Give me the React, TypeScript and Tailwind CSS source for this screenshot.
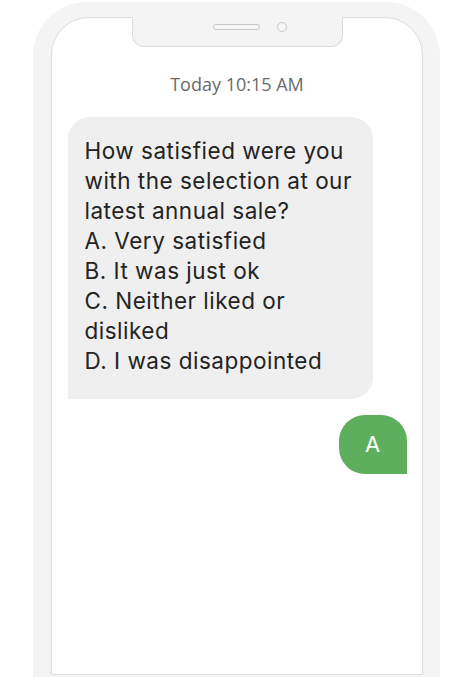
import React from "react";

export default function App() {
  const lines = [
    "How satisfied were you",
    "with the selection at our",
    "latest annual sale?",
    "A. Very satisfied",
    "B. It was just ok",
    "C. Neither liked or",
    "disliked",
    "D. I was disappointed",
  ];
  return (
    <div
      className="w-[474px] h-[677px] overflow-hidden bg-white"
      style={{ fontFamily: '"Open Sans", "Liberation Sans", sans-serif' }}
    >
      <div className="ml-[33px] mt-[2px] w-[407px] h-[720px] bg-[#f4f4f4] rounded-t-[54px] pt-[15px] pl-[18px] pr-[17px]">
        <div className="relative h-[658px] bg-white border-[1.5px] border-[#dcdcdc] rounded-t-[38px]">
          {/* notch */}
          <div className="absolute left-[79.5px] top-[-1.5px] w-[211px] h-[30.5px] bg-[#f4f4f4] border-[1.5px] border-t-0 border-[#dcdcdc] rounded-b-[12px]">
            <div className="flex items-center h-[20px] pl-[80px] gap-[17px]">
              <div className="w-[47px] h-[6px] rounded-full border-[1.5px] border-[#c8c8c8] bg-[#f6f6f6]" />
              <div className="w-[10px] h-[10px] rounded-full border-[1.5px] border-[#c8c8c8] bg-[#f6f6f6]" />
            </div>
          </div>

          <div className="flex flex-col pt-[54px]">
            <div className="text-center text-[18px] leading-[24px] text-[#6a6a6a]">
              Today 10:15 AM
            </div>
            <div
              className="mt-[21px] ml-[15.5px] w-[305px] bg-[#efefef] rounded-[22px] rounded-bl-none pt-[19px] pb-[23px] pl-[17px] text-[22.5px] tracking-[0.5px] leading-[30px] text-[#232323]"
              style={{ fontFamily: 'Inter, "Open Sans", sans-serif' }}
            >
              {lines.map((l) => (
                <div key={l} className="whitespace-nowrap">
                  {l}
                </div>
              ))}
            </div>
            <div
              className="mt-[16px] self-end mr-[15.5px] w-[68px] h-[59px] bg-[#5dae5d] rounded-[26px] rounded-br-none flex items-center justify-center text-white text-[22px]"
              style={{ fontFamily: 'Inter, "Open Sans", sans-serif' }}
            >
              A
            </div>
          </div>
        </div>
      </div>
    </div>
  );
}
